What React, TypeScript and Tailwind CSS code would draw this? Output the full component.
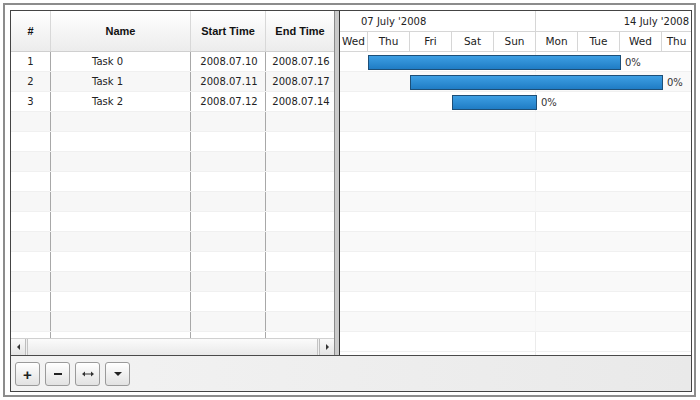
import React from 'react'

interface Task {
  id: number
  name: string
  start: string
  end: string
  startDay: number
  days: number
}

const tasks: Task[] = [
  { id: 1, name: 'Task 0', start: '2008.07.10', end: '2008.07.16', startDay: 1, days: 6 },
  { id: 2, name: 'Task 1', start: '2008.07.11', end: '2008.07.17', startDay: 2, days: 6 },
  { id: 3, name: 'Task 2', start: '2008.07.12', end: '2008.07.14', startDay: 3, days: 2 },
]

// first and last day are only partly visible, labels centered in the visible part
const days = [
  { d: 'Wed', w: 'w-[28px]' },
  { d: 'Thu', w: 'w-[42px]' },
  { d: 'Fri', w: 'w-[42px]' },
  { d: 'Sat', w: 'w-[42px]' },
  { d: 'Sun', w: 'w-[42px]' },
  { d: 'Mon', w: 'w-[42px]' },
  { d: 'Tue', w: 'w-[42px]' },
  { d: 'Wed', w: 'w-[42px]' },
  { d: 'Thu', w: 'flex-1' },
]
const DAY_W = 42
const OFFSET = -14
const ROWS = 15

const body = { fontFamily: '"DejaVu Sans", Verdana, sans-serif' }
const head = { fontFamily: '"Liberation Sans", Arial, sans-serif' }

function ToolButton({ children }: { children: React.ReactNode }) {
  return (
    <button className="w-[25px] h-[24px] border border-[#9a9a9a] rounded-[3px] bg-gradient-to-b from-white to-[#e2e2e2] flex items-center justify-center text-[#222] shadow-[inset_0_1px_0_#fff]">
      {children}
    </button>
  )
}

export default function App() {
  const rows = Array.from({ length: ROWS }, (_, i) => tasks[i])

  return (
    <div className="w-[700px] h-[400px] bg-white pt-[3px] pl-[3px]">
      <div className="w-[693px] h-[394px] border-2 border-[#8c8c8c] pt-[5px] pl-[5px]">
        <div className="w-[682px] h-[382px] border border-[#444] flex flex-col bg-white">
          {/* main area */}
          <div className="h-[344px] flex">
            {/* grid */}
            <div className="w-[324px] border-r border-[#8a8a8a] flex flex-col text-[10px] text-[#222]" style={body}>
              <div className="h-[41px] flex border-b border-[#cfcfcf] bg-gradient-to-b from-white to-[#ececec] font-bold text-[11px] text-[#111]" style={head}>
                <div className="w-[40px] border-r border-[#d8d8d8] flex items-center justify-center">#</div>
                <div className="w-[140px] border-r border-[#d8d8d8] flex items-center justify-center">Name</div>
                <div className="w-[75px] border-r border-[#d8d8d8] flex items-center justify-center">Start Time</div>
                <div className="flex-1 flex items-center justify-center">End Time</div>
              </div>
              <div className="flex-1 overflow-hidden">
                {rows.map((t, i) => (
                  <div key={i} className={`h-[20px] flex border-b border-[#f0f0f0] ${i % 2 === 1 ? 'bg-[#f7f7f7]' : 'bg-white'}`}>
                    <div className="w-[40px] border-r border-[#a8a8a8] flex items-center justify-center">{t?.id}</div>
                    <div className="w-[140px] border-r border-[#a8a8a8] flex items-center pl-[41px]">{t?.name}</div>
                    <div className="w-[75px] border-r border-[#a8a8a8] flex items-center justify-center pl-[2px]">{t?.start}</div>
                    <div className="flex-1 flex items-center justify-center pl-[2px]">{t?.end}</div>
                  </div>
                ))}
              </div>
              {/* horizontal scrollbar */}
              <div className="h-[17px] flex border-t border-[#d0d0d0] bg-[#f0f0f0]">
                <div className="w-[15px] border-r border-[#bdbdbd] bg-gradient-to-b from-[#fafafa] to-[#e4e4e4] flex items-center justify-center">
                  <span className="w-0 h-0 border-y-[3px] border-y-transparent border-r-[3px] border-r-[#333]" />
                </div>
                <div className="flex-1 mx-[1px] border-x border-[#c4c4c4] bg-gradient-to-b from-[#fbfbfb] to-[#e9e9e9]" />
                <div className="w-[15px] border-l border-[#bdbdbd] bg-gradient-to-b from-[#fafafa] to-[#e4e4e4] flex items-center justify-center">
                  <span className="w-0 h-0 border-y-[3px] border-y-transparent border-l-[3px] border-l-[#333]" />
                </div>
              </div>
            </div>

            {/* splitter */}
            <div className="w-[5px] bg-[#cacaca] border-r border-[#333]" />

            {/* gantt */}
            <div className="flex-1 flex flex-col overflow-hidden text-[10px] text-[#222]" style={body}>
              <div className="h-[21px] flex border-b border-[#d6d6d6] bg-white">
                <div className="w-[196px] border-r border-[#d6d6d6] flex items-center pl-[21px]">07 July '2008</div>
                <div className="flex-1 flex items-center justify-end pr-[2px]">14 July '2008</div>
              </div>
              <div className="h-[20px] flex border-b border-[#d6d6d6] bg-white">
                {days.map((d, i) => (
                  <div
                    key={i}
                    className={`${d.w} shrink-0 h-full ${i < days.length - 1 ? 'border-r border-[#d6d6d6]' : ''} flex items-center justify-center text-[10.5px]`}
                  >
                    {d.d}
                  </div>
                ))}
              </div>
              <div className="flex-1 relative overflow-hidden">
                <div className="absolute top-0 bottom-0 left-[195px] w-px bg-[#ebebeb]" />
                {rows.map((t, i) => (
                  <div key={i} className={`h-[20px] relative border-b border-[#f0f0f0] ${i % 2 === 1 ? 'bg-[#f7f7f7]/80' : 'bg-transparent'}`}>
                    {t && (
                      <>
                        <div
                          className="absolute top-[3px] h-[15px] border border-[#1d4f78] bg-gradient-to-b from-[#3d9fe4] to-[#1f7cc4]"
                          style={{ left: OFFSET + t.startDay * DAY_W, width: t.days * DAY_W + 1 }}
                        />
                        <span
                          className="absolute top-[3px] leading-[15px] text-[#333]"
                          style={{ left: OFFSET + (t.startDay + t.days) * DAY_W + 5 }}
                        >
                          0%
                        </span>
                      </>
                    )}
                  </div>
                ))}
              </div>
            </div>
          </div>

          {/* toolbar */}
          <div className="flex-1 border-t border-[#4a4a4a] bg-gradient-to-r from-[#f3f3f3] to-[#e9e9e9] flex items-start gap-[5px] pl-[4px] pt-[6px]">
            <ToolButton>
              <span className="text-[15px] font-bold leading-none" style={head}>+</span>
            </ToolButton>
            <ToolButton>
              <span className="w-[8px] h-[2px] bg-[#222]" />
            </ToolButton>
            <ToolButton>
              <svg width="12" height="6" viewBox="0 0 12 6">
                <path d="M0 3 L3 0.5 L3 5.5 Z M12 3 L9 0.5 L9 5.5 Z" fill="#333" />
                <path d="M2.5 3 H9.5" stroke="#333" strokeWidth="1" />
              </svg>
            </ToolButton>
            <ToolButton>
              <span className="w-0 h-0 border-x-[4px] border-x-transparent border-t-[4px] border-t-[#222]" />
            </ToolButton>
          </div>
        </div>
      </div>
    </div>
  )
}
